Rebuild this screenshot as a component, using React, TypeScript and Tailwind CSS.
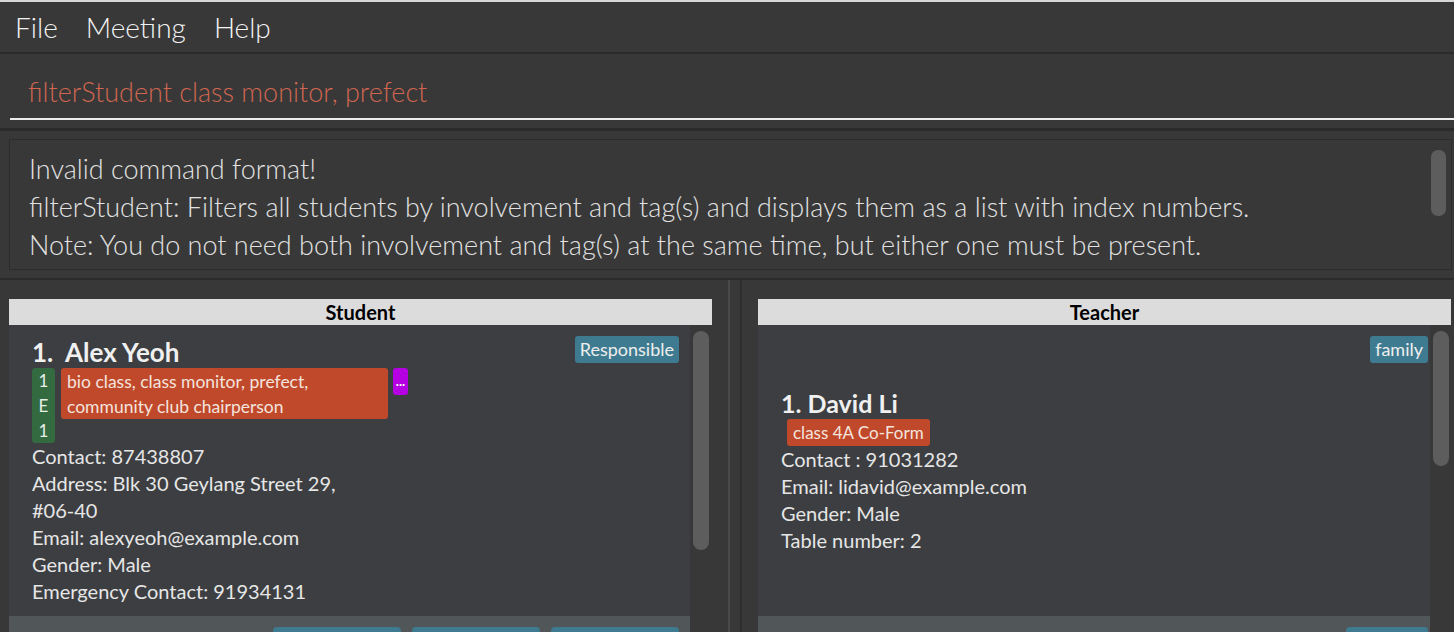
import React from 'react';

const studentInfo = [
  'Contact: 87438807',
  'Address: Blk 30 Geylang Street 29,',
  '#06-40',
  'Email: alexyeoh@example.com',
  'Gender: Male',
  'Emergency Contact: 91934131',
];

const teacherInfo = [
  'Contact : 91031282',
  'Email: lidavid@example.com',
  'Gender: Male',
  'Table number: 2',
];

function BlueTag({ label }: { label: string }) {
  return (
    <div className="h-[27px] rounded-[3px] bg-[#3e7b91] px-[5px] text-[18px] leading-[27px] text-[#eeeeee]">
      {label}
    </div>
  );
}

function PaneHeader({ title }: { title: string }) {
  return (
    <div className="h-[26px] bg-[#dcdcdc] text-center text-[20px] font-bold leading-[26px] text-black">
      {title}
    </div>
  );
}

function StudentCard() {
  return (
    <div className="flex h-[291px] bg-[#3c3e41]">
      <div className="flex-1 pl-[23px] pt-[12px]">
        <div className="whitespace-pre text-[26px] font-bold leading-[30px] text-[#f0f0f0]">1.  Alex Yeoh</div>
        <div className="mt-[1px] flex items-start">
          <div className="w-[23px] rounded-[3px] bg-[#336a40] text-center text-[17px] leading-[25px] text-[#e6efe8]">
            <div>1</div>
            <div>E</div>
            <div>1</div>
          </div>
          <div className="ml-[6px] h-[51px] w-[327px] rounded-[3px] bg-[#c1492b] px-[6px] pt-[1px] text-[17.5px] leading-[25px] text-[#f3e4de]">
            <div>bio class, class monitor, prefect,</div>
            <div>community club chairperson</div>
          </div>
          <div className="ml-[5px] h-[27px] w-[15px] rounded-[3px] bg-[#b400e2] text-center text-[13px] leading-[27px] font-bold text-white">
            ...
          </div>
        </div>
        <div className="text-[20px] leading-[27px] text-[#e6e6e6]">
          {studentInfo.map((line) => (
            <div key={line}>{line}</div>
          ))}
        </div>
      </div>
      <div className="pr-[11px] pt-[11px]">
        <BlueTag label="Responsible" />
      </div>
    </div>
  );
}

function TeacherCard() {
  return (
    <div className="flex h-[291px] bg-[#3c3e41]">
      <div className="flex-1 pl-[23px] pt-[63px]">
        <div className="text-[25px] font-bold leading-[30px] text-[#f0f0f0]">1. David Li</div>
        <div className="mt-[1px] ml-[6px] inline-block h-[27px] rounded-[3px] bg-[#c1492b] px-[6px] text-[17px] leading-[27px] text-[#f3e4de]">
          class 4A Co-Form
        </div>
        <div className="text-[20px] leading-[27px] text-[#e6e6e6]">
          {teacherInfo.map((line) => (
            <div key={line}>{line}</div>
          ))}
        </div>
      </div>
      <div className="pr-[2px] pt-[11px]">
        <BlueTag label="family" />
      </div>
    </div>
  );
}

export default function App() {
  return (
    <div className="flex h-[632px] w-full flex-col overflow-hidden bg-[#383838] font-['Lato',sans-serif]">
      <div className="h-[2px] bg-[#d6d6d6]" />

      {/* menu bar */}
      <div className="flex h-[50px] items-center gap-[28px] pl-[15px] text-[28px] font-light text-[#f2f2f2]">
        <span>File</span>
        <span>Meeting</span>
        <span>Help</span>
      </div>
      <div className="h-[2px] bg-[#2b2b2b]" />

      {/* command box */}
      <div className="h-[74px] pl-[10px] pt-[20px]">
        <div className="border-b-2 border-[#ececec] pb-[8px] pl-[18px] text-[27px] font-light leading-[36px] text-[#d06651]">
          filterStudent class monitor, prefect
        </div>
      </div>
      <div className="h-[3px] bg-[#2b2b2b]" />

      {/* result display */}
      <div className="h-[147px] pt-[8px]">
        <div className="ml-[9px] mr-[2px] flex h-[131px] border border-[#2c2c2c] bg-[#383838]">
          <div className="flex-1 pl-[19px] pt-[10px] text-[27px] font-light leading-[38px] text-[#e2e2e2]">
            <div>Invalid command format!</div>
            <div>filterStudent: Filters all students by involvement and tag(s) and displays them as a list with index numbers.</div>
            <div>Note: You do not need both involvement and tag(s) at the same time, but either one must be present.</div>
          </div>
          <div className="mr-[5px] mt-[10px] h-[66px] w-[15px] rounded-[7px] bg-[#5d5d5d]" />
        </div>
      </div>
      <div className="h-[2px] bg-[#2b2b2b]" />

      {/* lists */}
      <div className="flex flex-1 overflow-hidden">
        <div className="flex w-[728px] flex-col pl-[9px] pr-[16px] pt-[19px]">
          <PaneHeader title="Student" />
          <div className="flex flex-1 overflow-hidden">
            <div className="flex w-[681px] flex-col">
              <StudentCard />
              <div className="flex flex-1 justify-end gap-[11px] bg-[#515658] pr-[11px] pt-[11px]">
                <div className="w-[128px] rounded-t-[4px] bg-[#3e7b91]" />
                <div className="w-[128px] rounded-t-[4px] bg-[#3e7b91]" />
                <div className="w-[128px] rounded-t-[4px] bg-[#3e7b91]" />
              </div>
            </div>
            <div className="flex-1 pl-[3px] pt-[6px]">
              <div className="h-[219px] w-[16px] rounded-full bg-[#5d5d5d]" />
            </div>
          </div>
        </div>

        <div className="w-[2px] bg-[#4a4a4a]" />
        <div className="w-[10px]" />
        <div className="w-[2px] bg-[#2e2e2e]" />

        <div className="flex flex-1 flex-col pl-[16px] pr-[3px] pt-[19px]">
          <PaneHeader title="Teacher" />
          <div className="flex flex-1 overflow-hidden">
            <div className="flex w-[672px] flex-col">
              <TeacherCard />
              <div className="flex flex-1 justify-end bg-[#515658] pr-[2px] pt-[11px]">
                <div className="w-[82px] rounded-t-[4px] bg-[#3e7b91]" />
              </div>
            </div>
            <div className="flex-1 pl-[3px] pt-[6px]">
              <div className="h-[135px] w-[16px] rounded-full bg-[#5d5d5d]" />
            </div>
          </div>
        </div>
      </div>
    </div>
  );
}
